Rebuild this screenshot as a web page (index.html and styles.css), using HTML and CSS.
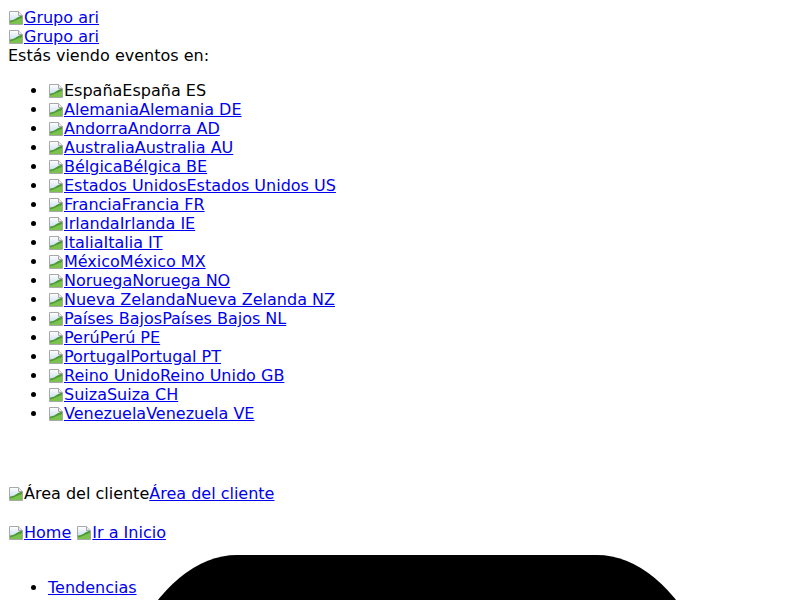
FILE: index.html
```html
<!DOCTYPE html>
<html lang="es">
<head>
    <meta charset="UTF-8">
    <meta name="viewport" content="width=device-width, initial-scale=1.0">
    <title>Grupo ari - Eventos</title>
    <link rel="stylesheet" href="styles.css">
</head>
<body>
    <div class="logo"><a href="#"><svg class="broken" viewBox="0 0 16 16"><use href="#bk"/></svg>Grupo ari</a></div>
    <div class="logo"><a href="#"><svg class="broken" viewBox="0 0 16 16"><use href="#bk"/></svg>Grupo ari</a></div>
    <div>Estás viendo eventos en:</div>

    <ul class="countries">
        <li><svg class="broken" viewBox="0 0 16 16"><use href="#bk"/></svg>EspañaEspaña ES</li>
        <li><a href="#"><svg class="broken" viewBox="0 0 16 16"><use href="#bk"/></svg>AlemaniaAlemania DE</a></li>
        <li><a href="#"><svg class="broken" viewBox="0 0 16 16"><use href="#bk"/></svg>AndorraAndorra AD</a></li>
        <li><a href="#"><svg class="broken" viewBox="0 0 16 16"><use href="#bk"/></svg>AustraliaAustralia AU</a></li>
        <li><a href="#"><svg class="broken" viewBox="0 0 16 16"><use href="#bk"/></svg>BélgicaBélgica BE</a></li>
        <li><a href="#"><svg class="broken" viewBox="0 0 16 16"><use href="#bk"/></svg>Estados UnidosEstados Unidos US</a></li>
        <li><a href="#"><svg class="broken" viewBox="0 0 16 16"><use href="#bk"/></svg>FranciaFrancia FR</a></li>
        <li><a href="#"><svg class="broken" viewBox="0 0 16 16"><use href="#bk"/></svg>IrlandaIrlanda IE</a></li>
        <li><a href="#"><svg class="broken" viewBox="0 0 16 16"><use href="#bk"/></svg>ItaliaItalia IT</a></li>
        <li><a href="#"><svg class="broken" viewBox="0 0 16 16"><use href="#bk"/></svg>MéxicoMéxico MX</a></li>
        <li><a href="#"><svg class="broken" viewBox="0 0 16 16"><use href="#bk"/></svg>NoruegaNoruega NO</a></li>
        <li><a href="#"><svg class="broken" viewBox="0 0 16 16"><use href="#bk"/></svg>Nueva ZelandaNueva Zelanda NZ</a></li>
        <li><a href="#"><svg class="broken" viewBox="0 0 16 16"><use href="#bk"/></svg>Países BajosPaíses Bajos NL</a></li>
        <li><a href="#"><svg class="broken" viewBox="0 0 16 16"><use href="#bk"/></svg>PerúPerú PE</a></li>
        <li><a href="#"><svg class="broken" viewBox="0 0 16 16"><use href="#bk"/></svg>PortugalPortugal PT</a></li>
        <li><a href="#"><svg class="broken" viewBox="0 0 16 16"><use href="#bk"/></svg>Reino UnidoReino Unido GB</a></li>
        <li><a href="#"><svg class="broken" viewBox="0 0 16 16"><use href="#bk"/></svg>SuizaSuiza CH</a></li>
        <li><a href="#"><svg class="broken" viewBox="0 0 16 16"><use href="#bk"/></svg>VenezuelaVenezuela VE</a></li>
    </ul>

    <div class="spacer"></div>

    <p class="client"><svg class="broken" viewBox="0 0 16 16"><use href="#bk"/></svg>Área del cliente<a href="#">Área del cliente</a></p>

    <p class="home"><a href="#"><svg class="broken" viewBox="0 0 16 16"><use href="#bk"/></svg>Home</a> <a href="#"><svg class="broken" viewBox="0 0 16 16"><use href="#bk"/></svg>Ir a Inicio</a></p>

    <div class="menu">
        <div class="blob"></div>
        <ul class="trends">
            <li><a href="#">Tendencias</a></li>
        </ul>
    </div>

    <!-- icono de imagen rota -->
    <svg class="defs" width="0" height="0">
        <defs>
            <linearGradient id="sky" x1="0" y1="0" x2="0" y2="1">
                <stop offset="0" stop-color="#ffffff"/>
                <stop offset="1" stop-color="#b9d3ec"/>
            </linearGradient>
            <g id="bk">
                <path d="M1.5 1.5h9l4 4v9h-13z" fill="url(#sky)" stroke="#a8a8a8"/>
                <path d="M10.5 1.5v4h4" fill="#e8e8e8" stroke="#a8a8a8"/>
                <path d="M2 14V10.5c2.5 0 5-1.2 7-2.7 1.6-1.2 3.2-1.8 5-1.8v8z" fill="#4c9a34"/>
                <path d="M2 14v-1.5c3-0.5 6-2.5 12-4.5v6z" fill="#7cc24e"/>
            </g>
        </defs>
    </svg>
</body>
</html>
```

FILE: styles.css
```css
body {
    margin: 8px;
    font-family: "DejaVu Sans", sans-serif;
    font-size: 16px;
    line-height: 19px;
    color: #000;
    background: #fff;
}
a {
    color: #0000ee;
}
.broken {
    width: 16px;
    height: 16px;
    vertical-align: -3px;
}
.defs {
    position: absolute;
    width: 0;
    height: 0;
}
.countries {
    margin: 16px 0;
    padding-left: 40px;
}
.spacer {
    height: 45px;
}
.client {
    margin: 0;
}
.home {
    margin: 20px 0 0;
}
.menu {
    display: grid;
    margin-top: 13px;
}
.menu > * {
    grid-area: 1 / 1;
}
.blob {
    width: 660px;
    height: 600px;
    margin-left: 79px;
    background: #000;
    border-radius: 150px / 300px;
}
.trends {
    margin: 23px 0 0;
    padding-left: 40px;
    align-self: start;
}
```
